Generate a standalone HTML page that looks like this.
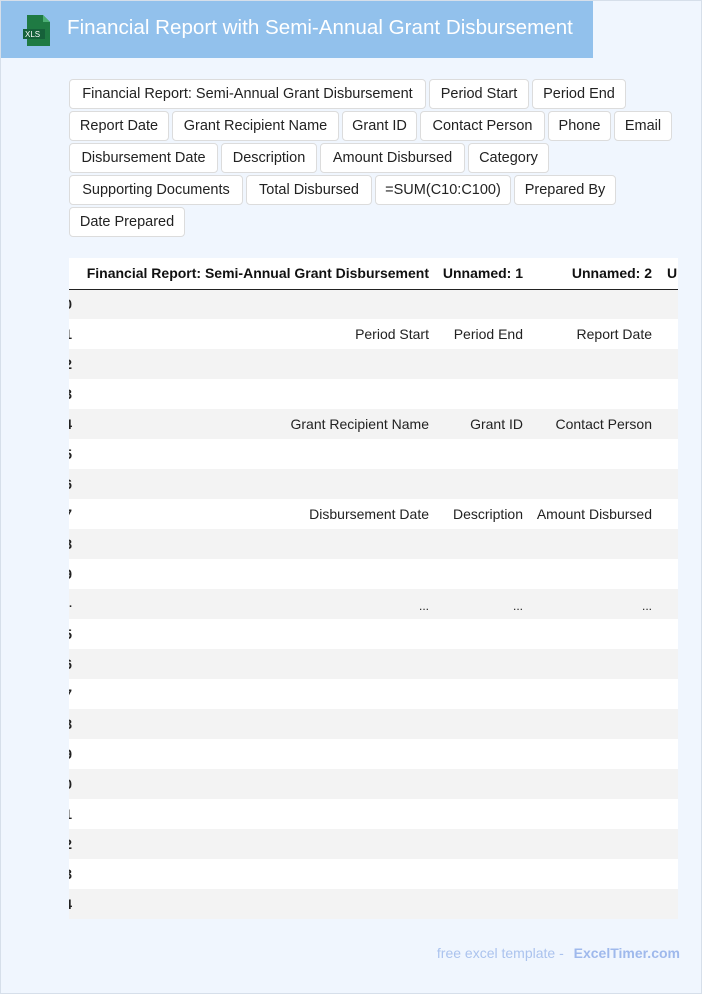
<!DOCTYPE html>
<html><head><meta charset="utf-8"><style>
*{box-sizing:border-box;margin:0;padding:0}
body{width:702px;height:994px;background:#f0f6fe;font-family:"Liberation Sans",Arial,sans-serif;position:relative;overflow:hidden;border:1px solid #d6dfea}
.hdr{position:absolute;left:0;top:0;width:592px;height:57px;background:#92c1ec}
.hdr h1{position:absolute;left:66px;top:15px;font-size:20.6px;font-weight:normal;color:#fff;white-space:nowrap}
.chips{position:absolute;left:68px;top:78px;width:620px}
.row{display:flex;height:30px;margin-bottom:2px}
.c{height:30px;border:1px solid #dcdcdc;border-radius:4px;background:#fff;font-size:14.5px;color:#222;display:flex;align-items:center;justify-content:center;margin-right:3px;white-space:nowrap}
.tw{position:absolute;left:68px;top:257px;width:609px;height:661px;overflow:hidden;background:#fff}
table{position:absolute;left:-33px;top:0;border-collapse:collapse;font-size:14px;color:#222;table-layout:fixed;width:720px}
td,th{height:30px;padding:0 6px;text-align:right;white-space:nowrap;overflow:visible}
th{font-size:14px;font-weight:bold;color:#111;height:31px;border-bottom:1.5px solid #222}
tbody tr:nth-child(odd) td{background:#f3f3f3}
.i{font-weight:bold;padding:0;text-align:right}
.foot{position:absolute;right:21px;top:944px;font-size:14px;color:#abc3ee}
.foot b{margin-left:6px;color:#9fb9ec}
</style></head><body>
<div class="hdr">
<svg style="position:absolute;left:20px;top:13px" width="32" height="33" viewBox="0 0 32 33"><path d="M6 1h16l7 7v24H6z" fill="#1f7a43"/><path d="M22 1v7h7z" fill="#4caf74"/><rect x="2" y="15" width="22" height="10" fill="#16613a"/><text x="4" y="23" font-size="8" fill="#fff" font-family="Liberation Sans">XLS</text></svg>
<h1>Financial Report with Semi-Annual Grant Disbursement</h1></div>
<div class="chips">
<div class="row"><div class="c" style="width:357px">Financial Report: Semi-Annual Grant Disbursement</div><div class="c" style="width:100px">Period Start</div><div class="c" style="width:94px">Period End</div></div>
<div class="row"><div class="c" style="width:100px">Report Date</div><div class="c" style="width:167px">Grant Recipient Name</div><div class="c" style="width:75px">Grant ID</div><div class="c" style="width:125px">Contact Person</div><div class="c" style="width:63px">Phone</div><div class="c" style="width:58px">Email</div></div>
<div class="row"><div class="c" style="width:149px">Disbursement Date</div><div class="c" style="width:96px">Description</div><div class="c" style="width:145px">Amount Disbursed</div><div class="c" style="width:81px">Category</div></div>
<div class="row"><div class="c" style="width:174px">Supporting Documents</div><div class="c" style="width:126px">Total Disbursed</div><div class="c" style="width:136px">=SUM(C10:C100)</div><div class="c" style="width:102px">Prepared By</div></div>
<div class="row"><div class="c" style="width:116px">Date Prepared</div></div>
</div>
<div class="tw"><table>
<colgroup><col style="width:36px"><col style="width:363px"><col style="width:94px"><col style="width:129px"><col style="width:98px"></colgroup>
<thead><tr><th class="i"></th><th>Financial Report: Semi-Annual Grant Disbursement</th><th>Unnamed: 1</th><th>Unnamed: 2</th><th style="text-align:left;padding-left:9px">Unnamed: 3</th></tr></thead>
<tbody>
<tr><td class="i">0</td><td></td><td></td><td></td><td></td></tr>
<tr><td class="i">1</td><td>Period Start</td><td>Period End</td><td>Report Date</td><td></td></tr>
<tr><td class="i">2</td><td></td><td></td><td></td><td></td></tr>
<tr><td class="i">3</td><td></td><td></td><td></td><td></td></tr>
<tr><td class="i">4</td><td>Grant Recipient Name</td><td>Grant ID</td><td>Contact Person</td><td></td></tr>
<tr><td class="i">5</td><td></td><td></td><td></td><td></td></tr>
<tr><td class="i">6</td><td></td><td></td><td></td><td></td></tr>
<tr><td class="i">7</td><td>Disbursement Date</td><td>Description</td><td>Amount Disbursed</td><td></td></tr>
<tr><td class="i">8</td><td></td><td></td><td></td><td></td></tr>
<tr><td class="i">9</td><td></td><td></td><td></td><td></td></tr>
<tr><td class="i" style="font-size:11px">...</td><td style="font-size:12px;padding-top:4px">...</td><td style="font-size:12px;padding-top:4px">...</td><td style="font-size:12px;padding-top:4px">...</td><td></td></tr>
<tr><td class="i">15</td><td></td><td></td><td></td><td></td></tr>
<tr><td class="i">16</td><td></td><td></td><td></td><td></td></tr>
<tr><td class="i">17</td><td></td><td></td><td></td><td></td></tr>
<tr><td class="i">18</td><td></td><td></td><td></td><td></td></tr>
<tr><td class="i">19</td><td></td><td></td><td></td><td></td></tr>
<tr><td class="i">20</td><td></td><td></td><td></td><td></td></tr>
<tr><td class="i">21</td><td></td><td></td><td></td><td></td></tr>
<tr><td class="i">22</td><td></td><td></td><td></td><td></td></tr>
<tr><td class="i">23</td><td></td><td></td><td></td><td></td></tr>
<tr><td class="i">24</td><td></td><td></td><td></td><td></td></tr>
</tbody>
</table></div>
<div class="foot">free excel template - <b>ExcelTimer.com</b></div>
</body></html>
